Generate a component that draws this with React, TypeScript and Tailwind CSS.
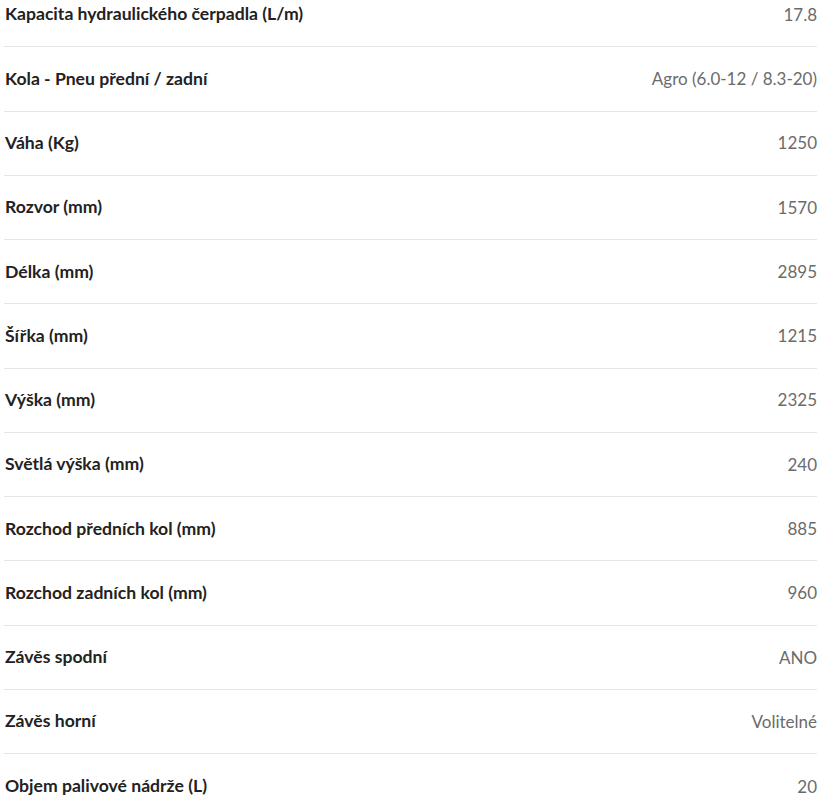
const specs: [string, string][] = [
  ["Kapacita hydraulického čerpadla (L/m)", "17.8"],
  ["Kola - Pneu přední / zadní", "Agro (6.0-12 / 8.3-20)"],
  ["Váha (Kg)", "1250"],
  ["Rozvor (mm)", "1570"],
  ["Délka (mm)", "2895"],
  ["Šířka (mm)", "1215"],
  ["Výška (mm)", "2325"],
  ["Světlá výška (mm)", "240"],
  ["Rozchod předních kol (mm)", "885"],
  ["Rozchod zadních kol (mm)", "960"],
  ["Závěs spodní", "ANO"],
  ["Závěs horní", "Volitelné"],
  ["Objem palivové nádrže (L)", "20"],
];

export default function App() {
  return (
    <div className="bg-white min-h-screen overflow-hidden font-['Lato',sans-serif]">
      <div className="ml-[4px] mr-[6px] -mt-[17px]">
        {specs.map(([label, value], i) => (
          <div
            key={label}
            className={`flex items-center justify-between h-[64.27px] ${
              i < specs.length - 1 ? "border-b border-[#e5e5e5]" : ""
            }`}
          >
            <span className="pl-[1px] text-[17.6px] font-bold text-[#222222]">{label}</span>
            <span className="text-[17px] text-[#6b6b6b]">{value}</span>
          </div>
        ))}
      </div>
    </div>
  );
}
